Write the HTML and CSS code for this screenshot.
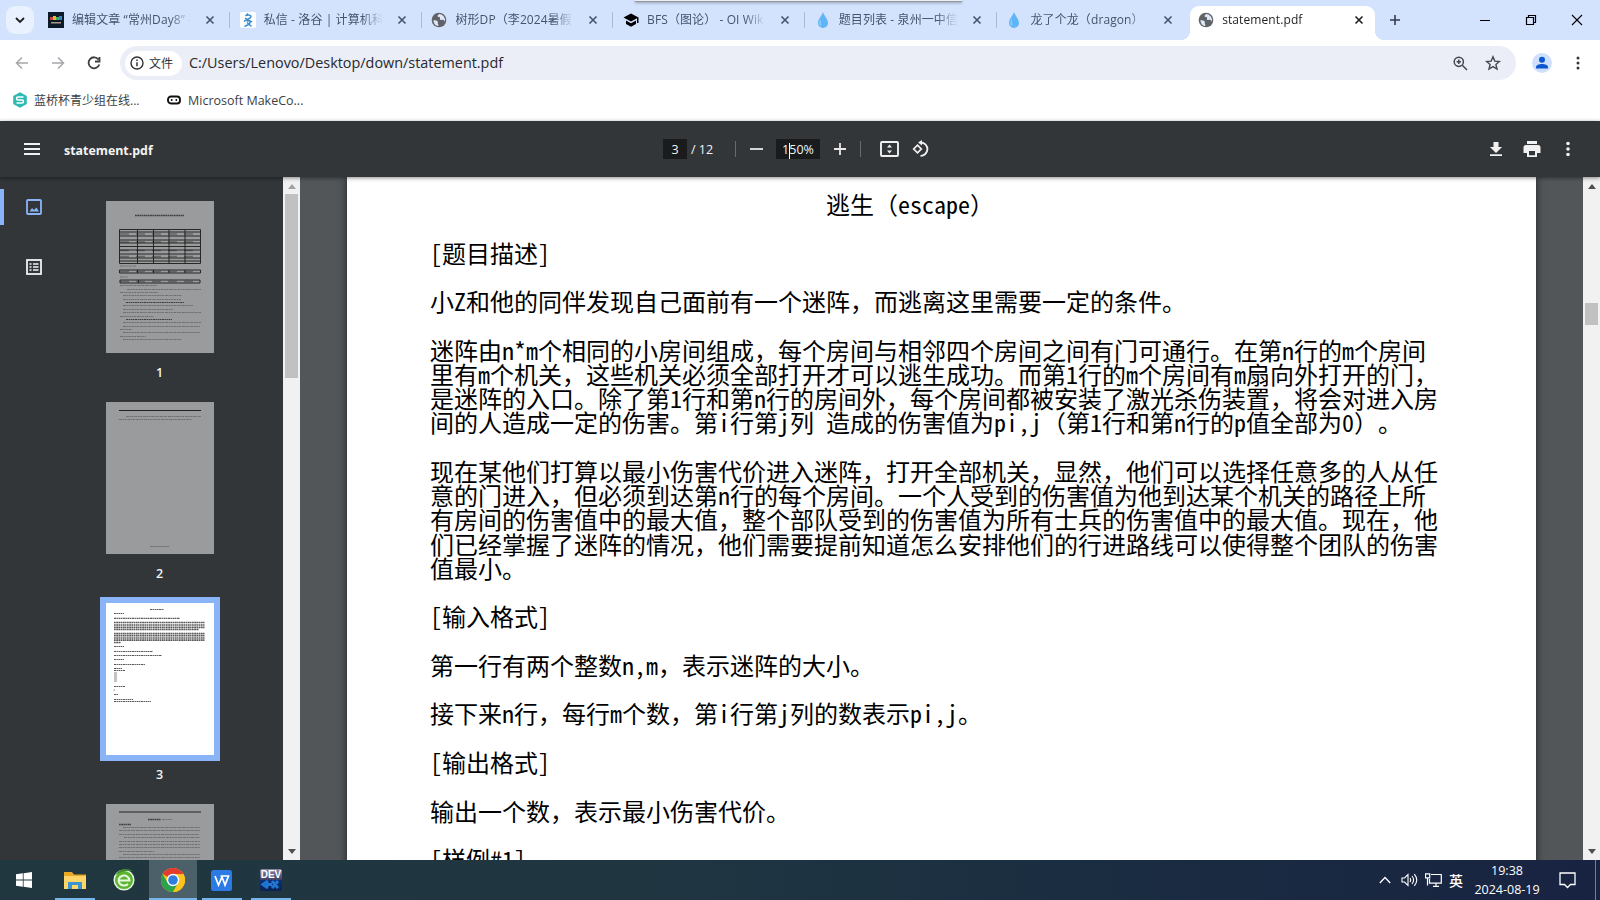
FILE: index.html
```html
<!DOCTYPE html>
<html lang="zh-CN">
<head>
    <meta charset="UTF-8">
    <title>statement.pdf</title>
    <link rel="stylesheet" href="styles.css">
</head>
<body>
    <svg class="defs">
        <symbol id="i-close" viewBox="0 0 10 10"><path d="M1.5 1.5l7 7M8.5 1.5l-7 7" fill="none" stroke="currentColor" stroke-width="1.6"/></symbol>
        <symbol id="i-globe" viewBox="0 0 16 16">
            <circle cx="8" cy="8" r="7.3" fill="#5f6368"/>
            <path d="M2.4 8.2c1.8 0 3.6 0 4.3 1.2.5 1-.3 1.5.2 2.3.5.7.5 1.3.4 2.4A6.2 6.2 0 0 1 2.4 8.200zM8.500 2c-1.500.8-2.200 1.600-1.800 2.500.4.8 1.700.2 2.200 1 .5.900-.5 1.600.3 2.200 1.200.7 2.300-.3 3.300.3.700.500.800 1.300 1.400 1.300A6.200 6.200 0 0 0 8.500 2z" fill="#dfe8f7"/>
        </symbol>
        <symbol id="i-drop" viewBox="0 0 16 16">
            <path d="M8 0C9 3.500 13 7 13 11a5 5 0 0 1-10 0C3 7 7 3.500 8 0z" fill="#5fb5f5"/>
            <path d="M6 6.500C4.800 8.500 4.300 10 4.600 12c.3 1 .8 1.500 1.600 2-.8-2.500-.8-5-.2-7.500z" fill="#a5dcff"/>
        </symbol>
        <symbol id="i-up" viewBox="0 0 8 5"><path d="M0 5l4-5 4 5z" fill="currentColor"/></symbol>
    </svg>

    <div class="overlay-bar"></div>

    <header class="tabstrip">
        <button class="tab-search"><svg width="10" height="7" viewBox="0 0 10 7"><path d="M1 1l4 4 4-4" fill="none" stroke="#1f1f1f" stroke-width="1.800"/></svg></button>
        <div class="tab">
            <svg class="fav" viewBox="0 0 16 16"><path fill="#0d1a2a" d="M0 0h16v16H0z"/><path fill="#c43" d="M2 5h3v3H2z"/><path fill="#db3" d="M5 4h3v4H5z"/><path fill="#4a6" d="M8 5h3v3H8z"/><path fill="#38c" d="M11 4h3v4h-3z"/><path fill="#a98" d="M3 10h10v1.500H3z"/></svg>
            <span class="label">编辑文章 “常州Day8” -</span>
            <svg class="x"><use href="#i-close"/></svg><i class="sep"></i>
        </div>
        <div class="tab">
            <svg class="fav" viewBox="0 0 16 16"><rect width="16" height="16" rx="2" fill="#fff"/><path d="M8 1.500L5.500 4M6 3.500c3-1 6 0 4.500 2C9 7.500 6 7 4 9.500M5 6c2 2 5 2.500 7 4M6.500 9C10 8 11.500 10 8.500 12.500L4.500 14.500M7 10.500l4.500 4" fill="none" stroke="#3d8fd0" stroke-width="1.500"/></svg>
            <span class="label">私信 - 洛谷 | 计算机科</span>
            <svg class="x"><use href="#i-close"/></svg><i class="sep"></i>
        </div>
        <div class="tab">
            <svg class="fav"><use href="#i-globe"/></svg>
            <span class="label">树形DP（李2024暑假</span>
            <svg class="x"><use href="#i-close"/></svg><i class="sep"></i>
        </div>
        <div class="tab">
            <svg class="fav" viewBox="0 0 16 16"><path d="M8 1.500L.5 5.500 8 9.500l6-3.200V11h1.500V5.500zM3 8.500V12l5 2.800 5-2.800V8.500l-5 2.700z" fill="#000"/></svg>
            <span class="label">BFS（图论） - OI Wik</span>
            <svg class="x"><use href="#i-close"/></svg><i class="sep"></i>
        </div>
        <div class="tab">
            <svg class="fav"><use href="#i-drop"/></svg>
            <span class="label">题目列表 - 泉州一中信</span>
            <svg class="x"><use href="#i-close"/></svg><i class="sep"></i>
        </div>
        <div class="tab">
            <svg class="fav"><use href="#i-drop"/></svg>
            <span class="label">龙了个龙（dragon）</span>
            <svg class="x"><use href="#i-close"/></svg>
        </div>
        <div class="tab active">
            <svg class="fav"><use href="#i-globe"/></svg>
            <span class="label">statement.pdf</span>
            <svg class="x"><use href="#i-close"/></svg>
        </div>
        <svg class="new-tab" viewBox="0 0 12 12"><path d="M6 1v10M1 6h10" stroke="#333d4d" stroke-width="1.600"/></svg>
        <div class="window-buttons">
            <svg width="12" height="12"><path d="M1 6.500h10" stroke="#000"/></svg>
            <svg width="12" height="12"><path d="M1.500 3.500h7v7h-7zM3.500 3V1.500h7v7H9" fill="none" stroke="#000" stroke-width="1.200"/></svg>
            <svg width="12" height="12"><path d="M1 1l10 10M11 1L1 11" stroke="#000" stroke-width="1.100"/></svg>
        </div>
    </header>

    <div class="navbar">
        <div class="nav-icons">
            <svg width="14" height="14"><path d="M13 7H2M7 1.500L1.500 7 7 12.500" fill="none" stroke="#a5a7aa" stroke-width="1.500"/></svg>
            <svg width="14" height="14"><path d="M1 7h11M7 1.500L12.500 7 7 12.500" fill="none" stroke="#a5a7aa" stroke-width="1.500"/></svg>
            <svg width="14" height="14"><path d="M12.300 8.500A5.500 5.500 0 1 1 11.500 3.500M12.500 1v4.500H8" fill="none" stroke="#3c4043" stroke-width="1.800"/></svg>
        </div>
        <div class="omnibox">
            <span class="chip">
                <svg width="14" height="14"><circle cx="7" cy="7" r="6" fill="none" stroke="#303236" stroke-width="1.400"/><path d="M7 6.200v4M7 3.500v1.500" stroke="#303236" stroke-width="1.500"/></svg>
                文件
            </span>
            <span class="url">C:/Users/Lenovo/Desktop/down/statement.pdf</span>
            <svg class="zoomed" width="15" height="15"><circle cx="5.800" cy="5.800" r="4.600" fill="none" stroke="#44474c" stroke-width="1.500"/><path d="M9.300 9.300l4.700 4.700M5.800 3.600v4.400M3.600 5.800H8" stroke="#44474c" stroke-width="1.500"/></svg>
            <svg width="16" height="16" viewBox="0 0 16 16"><path d="M8 1.800l1.800 4.300 4.600.4-3.500 3 1.100 4.500L8 11.600 4 14l1.100-4.500-3.500-3 4.600-.4z" fill="none" stroke="#44474c" stroke-width="1.400"/></svg>
        </div>
        <svg class="avatar" width="20" height="20"><circle cx="10" cy="10" r="10" fill="#cfe0fc"/><circle cx="10" cy="6.800" r="3" fill="#0b57d0"/><path d="M4 15.500v-1.300c0-2 3-3.200 6-3.200s6 1.200 6 3.200v1.300z" fill="#0b57d0"/></svg>
        <svg class="menu" width="4" height="14"><circle cx="2" cy="2" r="1.500"/><circle cx="2" cy="7" r="1.500"/><circle cx="2" cy="12" r="1.500"/></svg>
    </div>

    <div class="bookmarks">
        <svg width="16" height="16"><path d="M8 .2l6.800 3.900v7.800L8 15.800 1.200 11.900V4.100z" fill="#2fb9b3"/><path d="M11.500 5H6a1.500 1.500 0 0 0 0 3h4a1.500 1.500 0 0 1 0 3H4.500" fill="none" stroke="#fff" stroke-width="1.500"/></svg>
        <span class="bm-cn">蓝桥杯青少组在线...</span>
        <svg class="mc" width="14" height="10"><rect x="1" y="1.500" width="12" height="7" rx="3" fill="none" stroke="#111" stroke-width="1.900"/><circle cx="4.700" cy="5" r=".9"/><circle cx="9.300" cy="5" r=".9"/></svg>
        <span class="bm-en">Microsoft MakeCo...</span>
    </div>

    <div class="pdf-toolbar">
        <div class="side left">
            <svg width="16" height="12"><path d="M0 1h16M0 6h16M0 11h16" stroke="#f1f1f1" stroke-width="2"/></svg>
            <b>statement.pdf</b>
        </div>
        <div class="center">
            <span class="field page-no">3</span>
            <span class="total">/ 12</span>
            <i class="bar"></i>
            <svg class="minus" width="13" height="12"><path d="M0 6h13" stroke="#e8e8e8" stroke-width="1.800"/></svg>
            <span class="field zoom">1<i class="caret"></i>50%</span>
            <svg class="plus" width="12" height="12"><path d="M6 0v12M0 6h12" stroke="#e8e8e8" stroke-width="1.800"/></svg>
            <i class="bar bar2"></i>
            <svg class="fit" width="19" height="16"><rect x="1" y="1" width="17" height="14" rx="1" fill="none" stroke="#f1f1f1" stroke-width="1.900"/><path d="M9.500 3.500L12 6.500H7zM9.500 12.500L7 9.500h5z" fill="#f1f1f1"/></svg>
            <svg class="rotate" width="18" height="18"><path d="M5.500 5.200L9.300 9l-3.800 3.800L1.700 9z" fill="none" stroke="#f1f1f1" stroke-width="1.700"/><path d="M9 2.500A6.600 6.600 0 1 1 8.500 15.800" fill="none" stroke="#f1f1f1" stroke-width="1.800"/><path d="M6 2.500L10 0v5.500z" fill="#f1f1f1"/></svg>
        </div>
        <div class="side right">
            <svg width="14" height="16"><path d="M4.500 1h5v5H13l-6 6-6-6h3.500zM1 13.200h12V15H1z" fill="#f1f1f1"/></svg>
            <svg width="18" height="16"><path d="M4 0h10v3H4zM3 4h12a2.500 2.500 0 0 1 2.500 2.500V12H14v4H4v-4H.5V6.500A2.500 2.500 0 0 1 3 4zm3 6v4.200h6V10z" fill="#f1f1f1" fill-rule="evenodd"/></svg>
            <svg class="more" width="4" height="16"><circle cx="2" cy="2.500" r="1.800" fill="#f1f1f1"/><circle cx="2" cy="8" r="1.800" fill="#f1f1f1"/><circle cx="2" cy="13.500" r="1.800" fill="#f1f1f1"/></svg>
        </div>
    </div>

    <main class="viewer">
        <aside class="sidebar">
            <nav class="modes">
                <span class="mode on"><svg width="16" height="16"><rect x="1" y="1" width="14" height="14" rx="1" fill="none" stroke="#8ab4f8" stroke-width="1.800"/><path d="M3.500 12.500l2.500-3.500 2 2L10.500 8.500l2.500 4z" fill="#8ab4f8"/></svg></span>
                <span class="mode"><svg width="16" height="16"><rect x="1" y="1" width="14" height="14" fill="none" stroke="#f1f1f1" stroke-width="1.800"/><path d="M3.500 5h2M7 5h5.500M3.500 8h2M7 8h5.500M3.500 11h2M7 11h5.500" stroke="#f1f1f1" stroke-width="1.600"/></svg></span>
            </nav>
            <div class="thumbs">
                <svg class="thumb" viewBox="0 0 108 152">
                    <path class="t3" d="M29 14.500h49"/>
                    <path class="cells" d="M14 33h80M14 41h80M14 49.500h80M14 55.500h80M14 70.500h80M14 80.500h80"/>
                    <path class="grid" d="M13.500 28.500h81v34h-81zM13.500 31h81M13.500 35h81M13.500 39h81M13.500 42h81M13.500 45.500h81M13.500 49h81M13.500 53h81M13.500 57h81M13.500 60h81M31.500 28.500v34M47.500 28.500v34M63 28.500v34M79 28.500v34M13.500 69h81v3h-81zM31.500 69v3M47.500 69v3M63 69v3M79 69v3M14 79h80v3h-80zM32.500 79v3"/>
                    <path class="t1" d="M14 65h16M14 76h8M14 84.500h37M21 88.500h74M14 91.500h38M17 94.500h59M17 98.500h58M17 104.500h70M17 108.500h50M17 111.500h78M14 115.500h34M17 121.500h78M17 125.500h77M14 128.500h12M17 131.500h77M14 135.500h26M17 138.500h58"/>
                    <path class="t2" d="M20 101.500h58M20 118.500h46"/>
                </svg>
                <span class="num">1</span>
                <svg class="thumb" viewBox="0 0 108 152">
                    <path class="t1" d="M20 14.500h75M13 17.500h73M44 144.500h19"/><path d="M13 8.500h82" stroke="#222"/>
                </svg>
                <span class="num">2</span>
                <svg class="thumb current" viewBox="0 0 108 152">
                    <path class="t2" d="M44 6.500h14M8 10.500h10M8 15.300h66M8 43.500h10M8 48.500h39M8 52.500h48M8 56.500h10M8 61.500h31M8 65.500h8M8 67.500h11M8 83.500h11M8 91.500h4M8 96.500h19M8 98.500h37"/>
                    <path class="t3" d="M8 19.500h91M8 22h91M8 24.300h91M8 26.500h85M8 30.500h91M8 32.700h91M8 35h91M8 37.200h91M8 39.500h7"/>
                    <path d="M8 70h3M8 72h3M8 74h3M8 76h3M8 78h3M7.500 87h1.500" stroke="#888"/>
                </svg>
                <span class="num">3</span>
                <svg class="thumb" viewBox="0 0 108 152">
                    <path d="M13 8h82" stroke="#222"/><path class="t3" d="M42 15.500h13M13 20.500h12"/>
                    <path class="t1" d="M56 15.500h10M17 23.500h77M13 26.500h81M13 30.500h80M18 33.500h76M13 37.500h81M13 40.500h81M13 43.500h81M13 47.500h35M17 50.500h77M13 53.500h81"/>
                </svg>
            </div>
            <div class="scrollbar sb-side">
                <svg><use href="#i-up"/></svg>
                <i class="handle"></i>
                <svg class="down"><use href="#i-up"/></svg>
            </div>
        </aside>

        <div class="canvas">
            <article class="page">
                <h1>逃生（<code>escape</code>）</h1>
                <p class="head">[题目描述]</p>
                <p>小<code>Z</code>和他的同伴发现自己面前有一个迷阵，而逃离这里需要一定的条件。</p>
                <p>迷阵由<code>n*m</code>个相同的小房间组成，每个房间与相邻四个房间之间有门可通行。在第<code>n</code>行的<code>m</code>个房间<br>里有<code>m</code>个机关，这些机关必须全部打开才可以逃生成功。而第<code>1</code>行的<code>m</code>个房间有<code>m</code>扇向外打开的门，<br>是迷阵的入口。除了第<code>1</code>行和第<code>n</code>行的房间外，每个房间都被安装了激光杀伤装置，将会对进入房<br>间的人造成一定的伤害。第<code>i</code>行第<code>j</code>列<code> </code>造成的伤害值为<code>pi,j</code>（第<code>1</code>行和第<code>n</code>行的<code>p</code>值全部为<code>0</code>）。</p>
                <p>现在某他们打算以最小伤害代价进入迷阵，打开全部机关，显然，他们可以选择任意多的人从任<br>意的门进入，但必须到达第<code>n</code>行的每个房间。一个人受到的伤害值为他到达某个机关的路径上所<br>有房间的伤害值中的最大值，整个部队受到的伤害值为所有士兵的伤害值中的最大值。现在，他<br>们已经掌握了迷阵的情况，他们需要提前知道怎么安排他们的行进路线可以使得整个团队的伤害<br>值最小。</p>
                <p class="head">[输入格式]</p>
                <p>第一行有两个整数<code>n,m</code>，表示迷阵的大小。</p>
                <p>接下来<code>n</code>行，每行<code>m</code>个数，第<code>i</code>行第<code>j</code>列的数表示<code>pi,j</code>。</p>
                <p class="head">[输出格式]</p>
                <p>输出一个数，表示最小伤害代价。</p>
                <p class="head">[样例#1]</p>
            </article>
        </div>
        <div class="scrollbar sb-main">
            <svg><use href="#i-up"/></svg>
            <i class="handle"></i>
            <svg class="down"><use href="#i-up"/></svg>
        </div>
    </main>

    <footer class="taskbar">
        <div class="apps">
            <span class="app start"><svg width="16" height="16"><path d="M0 2.300l6.800-1V7.600H0zM7.600 1.200L16 0v7.600H7.600zM0 8.400h6.800v6.300l-6.800-1zM7.600 8.400H16V16l-8.400-1.200z" fill="#fff"/></svg></span>
            <span class="app open"><svg width="22" height="19"><path d="M0 1h8l2 2.500h12V18H0z" fill="#e9a825"/><path d="M0 5h22v13H0z" fill="#fcd668"/><path d="M4 18v-7h14v7h-4v-4H8v4z" fill="#3b95d3"/></svg></span>
            <span class="app browser"><svg width="22" height="24"><circle cx="11" cy="12" r="9.800" fill="#5cb531" stroke="#e6f3df" stroke-width="1.500"/><path d="M6 12.500h10.500A5.500 5 0 1 0 15 16" fill="none" stroke="#e9f8e2" stroke-width="2"/><path d="M2 7C6 1 14-1 20 3c-5-1-12 0-18 4z" fill="#3c8b22"/></svg></span>
            <span class="app open focus"><svg width="24" height="24" viewBox="0 0 24 24"><circle cx="12" cy="12" r="12" fill="#fcc31e"/><path d="M12 12L1.600 6A12 12 0 0 1 22.400 6H12z" fill="#e33b2e"/><path d="M1.600 6A12 12 0 0 0 12 24l5.200-9L12 12 6.800 15z" fill="#2ba24c"/><path d="M12 12L22.400 6A12 12 0 0 1 12 24l5.200-9z" fill="#fcc31e"/><circle cx="12" cy="12" r="6.200" fill="#fff"/><circle cx="12" cy="12" r="4.800" fill="#2f7de1"/></svg></span>
            <span class="app open w"><svg width="21" height="21"><rect width="21" height="21" rx="2.500" fill="#2c7be5"/><path d="M4 6l3.500 9L11 7l3 8 3.500-9H9.500" fill="none" stroke="#fff" stroke-width="1.700"/></svg></span>
            <span class="app open dev"><span class="dev-logo">DEV<svg width="22" height="10"><path d="M8 1L3 4.500 8 8M12 1l6 7M18 1l-6 7M6 4.500h6" fill="none" stroke="#2077d0" stroke-width="3"/></svg></span></span>
        </div>
        <div class="tray">
            <svg width="12" height="8"><path d="M.8 7L6 1.500 11.200 7" fill="none" stroke="#fff" stroke-width="1.300"/></svg>
            <svg class="vol" width="17" height="14"><path d="M1 5v4h2.500L7 12.500v-11L3.500 5zM9 5c.8 1.200.8 2.800 0 4M11 3c2 2.500 2 5.500 0 8M13.300 1.200c3 3.500 3 8 0 11.600" fill="none" stroke="#fff" stroke-width="1.100"/></svg>
            <svg class="net" width="17" height="14"><path d="M6 1.500h10.300v8.700H4.500V6M8 13.300h6M11 10.500v2.500M.5.800h4.200v4H.5zM2.500 5v7.500" fill="none" stroke="#fff" stroke-width="1.200"/></svg>
            <span class="ime">英</span>
            <div class="clock"><span>19:38</span><span>2024-08-19</span></div>
            <svg class="note" width="17" height="17"><path d="M1 1h15v11.500h-4.500L8.500 15.500l-3-3H1z" fill="none" stroke="#fff" stroke-width="1.300"/></svg>
            <i class="peek"></i>
        </div>
    </footer>
</body>
</html>
```
FILE: styles.css
```css
* {
    box-sizing: border-box;
}
body {
    margin: 0;
    width: 1600px;
    height: 900px;
    overflow: hidden;
    display: flex;
    flex-direction: column;
    font-family: "Open Sans", "Noto Sans CJK SC", sans-serif;
    font-size: 12px;
    background: #fff;
}
svg {
    display: block;
    flex: none;
}
.defs {
    position: absolute;
    width: 0;
    height: 0;
}
.overlay-bar {
    position: absolute;
    left: 635px;
    top: 0;
    width: 327px;
    height: 2px;
    background: #eceff3;
    border-bottom: 1px solid #90959e;
    box-shadow: 0 1px 3px #8a94a8;
}

/* tabs */
.tabstrip {
    flex: none;
    height: 40px;
    display: flex;
    align-items: center;
    background: #d3e3fd;
}
.tab-search {
    width: 28px;
    height: 28px;
    margin: 0 6px;
    padding: 0;
    border: none;
    border-radius: 9px;
    background: #e9f1fe;
    display: flex;
    align-items: center;
    justify-content: center;
}
.tab {
    flex: none;
    width: 191.7px;
    height: 34px;
    align-self: flex-end;
    padding: 0 0 6px 8px;
    display: flex;
    align-items: center;
    color: #46546b;
}
.fav {
    width: 16px;
    height: 16px;
    margin-right: 8px;
}
.label {
    width: 119px;
    white-space: nowrap;
    line-height: 18px;
    letter-spacing: .1px;
    text-spacing-trim: space-all;
    mask-image: linear-gradient(to right, #000 82%, transparent 100%);
}
.x {
    width: 10px;
    height: 10px;
    margin-left: 14px;
}
.sep {
    width: 1px;
    height: 16px;
    margin-left: 14px;
    background: #a9b9d8;
}
.tab.active {
    width: 185px;
    margin-right: 14px;
    background: #fff;
    border-radius: 9px 9px 0 0;
    color: #1f1f1f;
    position: relative;
}
.tab.active::before,
.tab.active::after {
    content: "";
    position: absolute;
    bottom: 0;
    width: 9px;
    height: 9px;
}
.tab.active::before {
    left: -9px;
    background: radial-gradient(circle at 0 0, transparent 9px, #fff 9px);
}
.tab.active::after {
    right: -9px;
    background: radial-gradient(circle at 100% 0, transparent 9px, #fff 9px);
}
.tab.active .x {
    margin-left: 13px;
}
.new-tab {
    width: 12px;
    height: 12px;
}
.window-buttons {
    margin-left: auto;
    padding-right: 17px;
    display: flex;
    gap: 34px;
}

/* address bar */
.navbar {
    flex: none;
    height: 46px;
    display: flex;
    align-items: center;
}
.nav-icons {
    width: 120px;
    padding-left: 15px;
    display: flex;
    gap: 22px;
}
.omnibox {
    width: 1396px;
    height: 34px;
    padding: 0 15px 0 5px;
    border-radius: 17px;
    background: #ebeef7;
    display: flex;
    align-items: center;
}
.chip {
    width: 57px;
    height: 25px;
    padding-left: 5px;
    border-radius: 13px;
    background: #fff;
    display: flex;
    align-items: center;
    gap: 5px;
    white-space: nowrap;
    color: #303236;
}
.url {
    margin-left: 7px;
    padding-bottom: 2px;
    font-size: 14.4px;
    color: #27292d;
}
.zoomed {
    margin: 0 17px 0 auto;
}
.avatar {
    margin-left: 16px;
}
.menu {
    margin-left: 24px;
    fill: #33363a;
}
.bookmarks {
    flex: none;
    height: 35px;
    padding: 0 0 7px 12px;
    display: flex;
    align-items: center;
    color: #3c3f44;
}
.bm-cn {
    width: 107px;
    margin: 0 26px 0 6px;
    white-space: nowrap;
}
.bm-en {
    margin-left: 7px;
    font-size: 12.5px;
}

/* pdf toolbar */
.pdf-toolbar {
    flex: none;
    height: 56px;
    background: #323639;
    color: #f4f4f4;
    display: flex;
    align-items: center;
    justify-content: space-between;
    position: relative;
    z-index: 2;
    box-shadow: 0 1px 4px rgba(0, 0, 0, .45);
}
.side {
    display: flex;
    align-items: center;
}
.left {
    width: 663px;
    padding-left: 24px;
    gap: 24px;
    font-size: 12.4px;
}
.left b {
    padding-top: 2px;
}
.right {
    width: 669px;
    padding-right: 30px;
    gap: 20px;
    justify-content: flex-end;
}
.more {
    margin-left: 5px;
}
.center {
    width: 268px;
    display: flex;
    align-items: center;
    font-size: 12.5px;
}
.field {
    height: 20px;
    line-height: 21px;
    text-align: center;
    background: #191b1c;
}
.page-no {
    width: 24px;
}
.total {
    width: 48px;
    padding-left: 4px;
    line-height: 21px;
}
.bar {
    width: 1px;
    height: 16px;
    background: #666a6d;
}
.minus {
    margin: 0 13px 0 14px;
}
.zoom {
    width: 44px;
}
.caret {
    display: inline-block;
    width: 1px;
    height: 16px;
    margin-right: -1px;
    vertical-align: middle;
    background: #fff;
}
.plus {
    margin: 0 14px;
}
.fit {
    margin: 0 13px 0 19px;
}

/* viewer */
.viewer {
    flex: none;
    height: 683px;
    display: flex;
    overflow: hidden;
}
.sidebar {
    width: 300px;
    display: flex;
    background: #323639;
}
.modes {
    width: 68px;
    padding-top: 12px;
}
.mode {
    height: 36px;
    margin-bottom: 24px;
    padding-left: 26px;
    display: flex;
    align-items: center;
}
.mode.on {
    padding-left: 22px;
    border-left: 4px solid #8ab4f8;
    border-radius: 0 4px 4px 0;
}
.thumbs {
    width: 183px;
    padding-top: 24px;
    display: flex;
    flex-direction: column;
    align-items: center;
    color: #f4f4f4;
}
.thumb {
    width: 108px;
    height: 152px;
    background: #999b9c;
}
.thumb path {
    fill: none;
}
.thumb .t1 {
    stroke: #606263;
    stroke-width: 1;
    stroke-dasharray: 3 .6 1.500 .5 2 .8;
    opacity: .75;
}
.thumb .t2 {
    stroke: #222;
    stroke-width: 1.200;
    stroke-dasharray: 2 .5 1.400 .6;
    opacity: .75;
}
.thumb .t3 {
    stroke: #222;
    stroke-width: 1.700;
    stroke-dasharray: 1.700 .5 2 .4 1.400 .5;
    opacity: .75;
}
.thumb .cells {
    stroke: #444;
    stroke-width: 1.500;
    stroke-dasharray: 9 7;
    opacity: .6;
}
.thumb .grid {
    stroke: #1c1c1c;
    stroke-width: .9;
}
.thumb.current {
    background: #fff;
    outline: 6px solid #8ab4f8;
}
.num {
    flex: none;
    height: 49px;
    line-height: 39px;
    font-size: 12.5px;
    font-weight: 600;
}
.scrollbar {
    width: 17px;
    margin-left: auto;
    padding: 7px 0 6px;
    background: #f1f1f1;
    color: #505050;
    display: flex;
    flex-direction: column;
    align-items: center;
}
.scrollbar svg {
    width: 8px;
    height: 5px;
}
.scrollbar .down {
    margin-top: auto;
    transform: rotate(180deg);
}
.handle {
    width: 13px;
    background: #c1c1c1;
}
.sb-side .handle {
    height: 184px;
    margin-top: 5px;
}
.sb-side svg:first-child {
    color: #a3a3a3;
}
.sb-main .handle {
    height: 22px;
    margin-top: 114px;
}
.canvas {
    width: 1283px;
    padding-left: 47px;
    background: #525659;
}
.page {
    width: 1189px;
    height: 720px;
    padding: 15px 83px 0;
    background: #fff;
    box-shadow: 0 0 8px rgba(0, 0, 0, .6);
    color: #000;
    font: 24px/24.260px "Noto Sans CJK SC", sans-serif;
    text-spacing-trim: space-all;
    text-autospace: no-autospace;
    white-space: nowrap;
}
.page h1,
.page p {
    margin: 0 0 24.260px;
    font-size: 24px;
    font-weight: 400;
}
.page h1 {
    padding-left: 396px;
}
/* half-width latin glyphs, 12px each */
.page code,
.page .head {
    font-family: inherit;
    font-size: inherit;
    font-feature-settings: "hwid";
}

/* taskbar */
.taskbar {
    flex: none;
    height: 40px;
    display: flex;
    justify-content: space-between;
    background: linear-gradient(to right, #203740, #1f3641 40%, #1a2b41 75%, #182341);
    color: #fff;
}
.apps {
    display: flex;
}
.app {
    width: 48px;
    height: 40px;
    margin-right: 2px;
    display: flex;
    align-items: center;
    justify-content: center;
}
.start {
    margin-right: 7px;
}
.browser {
    padding-left: 2px;
}
.open {
    width: 40px;
    margin-right: 4px;
    border-bottom: 2px solid #76b4ea;
    padding-top: 2px;
}
.focus {
    width: 48px;
    background: #4b6068;
    margin-right: 5px;
}
.w {
    margin-right: 9px;
    padding-right: 1px;
}
.dev-logo {
    width: 22px;
    height: 22px;
    border-radius: 2px;
    overflow: hidden;
    background: linear-gradient(#8a87a8, #3b3f66 50%, #0d2e78 52%, #0c2350);
    font: bold 10px/11px "Liberation Sans", sans-serif;
    text-align: center;
}
.tray {
    display: flex;
    align-items: center;
}
.vol {
    margin-left: 10px;
}
.net {
    margin-left: 7px;
}
.ime {
    margin-left: 7px;
    font-size: 14px;
    font-weight: 500;
}
.clock {
    width: 72px;
    margin: 0 16px 0 8px;
    display: flex;
    flex-direction: column;
    align-items: center;
    font-size: 12.5px;
    line-height: 19px;
}
.peek {
    width: 1px;
    height: 40px;
    margin: 0 4px 0 19px;
    background: #77809a;
}
```
